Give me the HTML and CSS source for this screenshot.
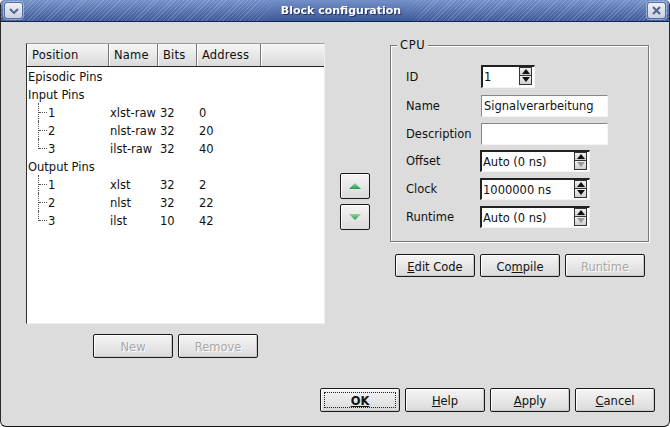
FILE: index.html
```html
<!DOCTYPE html>
<html lang="en">
<head>
<meta charset="utf-8">
<title>Block configuration</title>
<link rel="stylesheet" href="styles.css">
</head>
<body>
<div class="window">
  <header class="titlebar">
    <button class="wm-btn" aria-label="Menu"><svg width="10" height="6" viewBox="0 0 10 6"><path d="M1 1l4 4 4-4" fill="none" stroke="#54688f" stroke-width="2"/></svg></button>
    <div class="title"><span>Block configuration</span></div>
    <button class="wm-btn" aria-label="Close"><svg width="9" height="9" viewBox="0 0 9 9"><path d="M1 1l7 7M8 1l-7 7" fill="none" stroke="#54688f" stroke-width="2.2"/></svg></button>
  </header>
  <main class="main">
    <section class="left">
      <div class="list">
        <div class="head">
          <div class="hcell h-pos">Position</div>
          <div class="hcell h-name">Name</div>
          <div class="hcell h-bits">Bits</div>
          <div class="hcell h-addr">Address</div>
          <div class="hcell h-rest"></div>
        </div>
        <div class="row"><span>Episodic Pins</span></div>
        <div class="row"><span>Input Pins</span></div>
        <div class="row"><span class="pos"><i class="branch"></i>1</span><span>xlst-raw</span><span>32</span><span>0</span></div>
        <div class="row"><span class="pos"><i class="branch"></i>2</span><span>nlst-raw</span><span>32</span><span>20</span></div>
        <div class="row"><span class="pos"><i class="branch last"></i>3</span><span>ilst-raw</span><span>32</span><span>40</span></div>
        <div class="row"><span>Output Pins</span></div>
        <div class="row"><span class="pos"><i class="branch"></i>1</span><span>xlst</span><span>32</span><span>2</span></div>
        <div class="row"><span class="pos"><i class="branch"></i>2</span><span>nlst</span><span>32</span><span>22</span></div>
        <div class="row"><span class="pos"><i class="branch last"></i>3</span><span>ilst</span><span>10</span><span>42</span></div>
      </div>
      <div class="btn-row centered">
        <button class="btn" disabled>New</button>
        <button class="btn" disabled>Remove</button>
      </div>
    </section>
    <section class="arrows">
      <button class="arrow" aria-label="Up"><svg width="14" height="8" viewBox="0 0 14 8"><defs><linearGradient id="g" x1="0" y1="0" x2="0" y2="1"><stop offset="0" stop-color="#8fd8a0"/><stop offset="1" stop-color="#1f9a4c"/></linearGradient></defs><path d="M7 1l6 6H1z" fill="url(#g)"/></svg></button>
      <button class="arrow" aria-label="Down"><svg width="14" height="8" viewBox="0 0 14 8"><path d="M1 1h12l-6 6z" fill="url(#g)"/></svg></button>
    </section>
    <section class="right">
      <fieldset class="group">
        <legend>CPU</legend>
        <div class="field f-id"><label>ID</label><div class="spin s-id"><span>1</span><div class="spin-btns"><b class="up"></b><b class="down"></b></div></div></div>
        <div class="field f-name"><label>Name</label><div class="edit">Signalverarbeitung</div></div>
        <div class="field"><label>Description</label><div class="edit"></div></div>
        <div class="field f-offset"><label>Offset</label><div class="spin"><span>Auto (0 ns)</span><div class="spin-btns"><b class="up"></b><b class="down off"></b></div></div></div>
        <div class="field"><label>Clock</label><div class="spin"><span>1000000 ns</span><div class="spin-btns"><b class="up"></b><b class="down"></b></div></div></div>
        <div class="field"><label>Runtime</label><div class="spin"><span>Auto (0 ns)</span><div class="spin-btns"><b class="up"></b><b class="down off"></b></div></div></div>
      </fieldset>
      <div class="btn-row code">
        <button class="btn"><u>E</u>dit Code</button>
        <button class="btn">Co<u>m</u>pile</button>
        <button class="btn" disabled>Runtime</button>
      </div>
    </section>
  </main>
  <footer class="btn-row footer">
    <button class="btn default"><span class="focus"><u>OK</u></span></button>
    <button class="btn"><u>H</u>elp</button>
    <button class="btn"><u>A</u>pply</button>
    <button class="btn"><u>C</u>ancel</button>
  </footer>
</div>
</body>
</html>
```
FILE: styles.css
```css
* { box-sizing: border-box; }
html, body { margin: 0; padding: 0; }
body {
  width: 670px;
  height: 427px;
  overflow: hidden;
  background: #fff;
  font-family: "DejaVu Sans", sans-serif;
  font-size: 11.5px;
  color: #111;
}
.window {
  width: 670px;
  height: 427px;
  display: flex;
  flex-direction: column;
  background: #dcdcdc;
  border-left: 1px solid #2a2a2a;
  border-right: 1px solid #2a2a2a;
  border-bottom: 1px solid #111;
  border-radius: 5px 5px 6px 6px;
  overflow: hidden;
}
.titlebar {
  flex: none;
  height: 22px;
  display: flex;
  align-items: center;
  justify-content: space-between;
  padding: 0 3px;
  border-bottom: 1px solid #16254a;
  background:
    repeating-linear-gradient(135deg, rgba(255,255,255,.18) 0 1px, rgba(255,255,255,0) 1px 3px),
    linear-gradient(#7390c8, #3b5799);
}
.wm-btn {
  flex: none;
  width: 19px;
  height: 17px;
  padding: 0;
  display: flex;
  align-items: center;
  justify-content: center;
  border: 1px solid #5a6f9e;
  border-radius: 3px;
  background: linear-gradient(#eef1f7, #c9d1e3);
  box-shadow: 0 0 0 1px rgba(200,212,238,.55);
}
.title {
  flex: 1;
  align-self: stretch;
  display: flex;
  justify-content: center;
  align-items: center;
  margin: 0 220px 0 232px;
  background: linear-gradient(#7390c8, #3b5799);
  -webkit-mask-image: linear-gradient(90deg, transparent, #000 25px, #000 calc(100% - 25px), transparent);
  mask-image: linear-gradient(90deg, transparent, #000 25px, #000 calc(100% - 25px), transparent);
}
.title span {
  color: #fff;
  font-weight: bold;
  font-size: 11px;
  white-space: nowrap;
  text-shadow: 1px 1px 0 #22345f;
}
.main {
  flex: none;
  display: flex;
  align-items: flex-start;
  padding: 21px 0 0 25px;
}
.left { width: 299px; flex: none; }
.list {
  height: 281px;
  background: #fff;
  border: 1px solid #eee;
  border-top-color: #9a9a9a;
  border-left: 1px solid #333;
}
.head { display: flex; height: 23px; border-bottom: 1px solid #222; }
.hcell {
  height: 22px;
  line-height: 23px;
  padding-left: 5px;
  letter-spacing: .2px;
  background: linear-gradient(#f6f6f6, #dadada);
  border-right: 1px solid #777;
  box-shadow: inset 1px 0 0 #fff;
}
.h-pos { width: 82px; }
.h-name { width: 49px; }
.h-bits { width: 39px; }
.h-addr { width: 64px; }
.h-rest { flex: 1; border-right: 0; }
.row {
  display: grid;
  grid-template-columns: 82px 50px 39px 1fr;
  height: 18px;
  line-height: 20px;
  padding-left: 1px;
}
.row span { white-space: nowrap; }
.pos { position: relative; padding-left: 20px; }
.branch { position: absolute; left: 10px; top: 0; width: 9px; height: 18px; border-left: 1px dotted #555; }
.branch.last { height: 10px; }
.branch::after {
  content: "";
  position: absolute;
  left: 0;
  top: 9px;
  width: 8px;
  border-top: 1px dotted #555;
}
.btn-row { display: flex; gap: 5px; }
.centered { justify-content: center; margin-top: 10px; }
.btn {
  width: 80px;
  height: 24px;
  padding: 2px 0 0;
  border: 1px solid #1a1a1a;
  border-radius: 2px;
  font: inherit;
  color: #111;
  background: linear-gradient(#f5f5f5, #dadada);
  box-shadow: inset 1px 1px 0 #fff, inset -1px -1px 0 #c8c8c8;
}
.btn:disabled { color: #a8a8a8; text-shadow: 1px 1px 0 #fff; }
.arrows {
  flex: none;
  width: 30px;
  margin: 130px 0 0 15px;
  display: flex;
  flex-direction: column;
  gap: 5px;
}
.arrow {
  width: 30px;
  height: 26px;
  padding: 0;
  display: flex;
  align-items: center;
  justify-content: center;
  border: 1px solid #1a1a1a;
  border-radius: 2px;
  background: linear-gradient(#f5f5f5, #dadada);
  box-shadow: inset 1px 1px 0 #fff;
}
.right { flex: none; width: 265px; margin: 0 0 0 20px; padding-top: 2px; }
.group {
  position: relative;
  width: 259px;
  height: 197px;
  margin: 0;
  padding: 19px 0 0 15px;
  border: 1px solid #777;
  box-shadow: 1px 1px 0 #fff, inset 1px 1px 0 #fff;
}
legend {
  position: absolute;
  left: 6px;
  top: -8px;
  padding: 0 3px;
  background: #dcdcdc;
  line-height: 15px;
  letter-spacing: .6px;
}
.field { display: flex; align-items: center; height: 22px; margin-top: 6px; }
.f-id { height: 23px; margin-top: 0; }
.f-name { margin-top: 7px; }
.f-offset { margin-top: 5px; }
.field label { width: 75px; flex: none; }
.edit, .spin {
  height: 22px;
  border: 1px solid #f4f4f4;
  border-top: 2px solid #222;
  border-left: 2px solid #222;
  background: #fff;
  padding-left: 1px;
  line-height: 21px;
  white-space: nowrap;
}
.edit { width: 127px; border-top: 1px solid #888; border-left: 1px solid #888; line-height: 20px; padding-left: 2px; }
.spin { width: 110px; margin-left: -1px; display: flex; justify-content: space-between; padding-right: 2px; }
.s-id { width: 54px; height: 23px; margin-left: 0; }
.spin-btns { width: 13px; display: flex; flex-direction: column; flex: none; }
.spin-btns b {
  display: block;
  height: 9px;
  position: relative;
  background: linear-gradient(#f2f2f2, #cfcfcf);
  border: 1px solid #333;
}
.spin-btns .down { border-top: 0; height: 9px; }
.spin-btns b::after {
  content: "";
  position: absolute;
  left: 1.5px;
  width: 0;
  height: 0;
  border-left: 4px solid transparent;
  border-right: 4px solid transparent;
}
.spin-btns .up::after { top: 1px; border-bottom: 5px solid #111; }
.spin-btns .down::after { top: 1px; border-top: 5px solid #111; }
.spin-btns .down.off::after { border-top-color: #999; }
.code { margin: 12px 0 0 5px; }
.code .btn { height: 23px; }
.footer { margin-top: auto; justify-content: flex-end; padding: 0 14px 14px 0; }
.default { padding: 3px; }
.focus {
  display: block;
  height: 100%;
  line-height: 17px;
  border: 1px dotted #222;
  font-weight: bold;
}
```
